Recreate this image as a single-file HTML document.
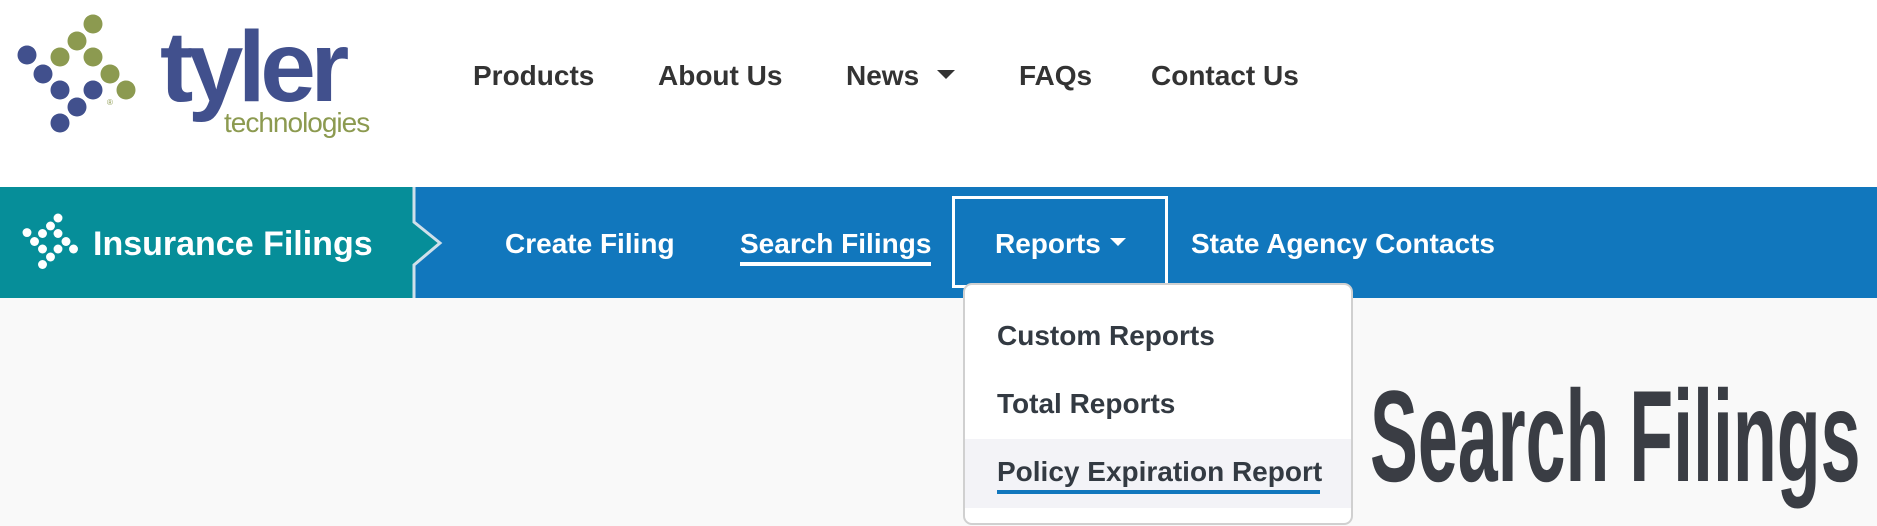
<!DOCTYPE html>
<html><head><meta charset="utf-8">
<style>
*{margin:0;padding:0;box-sizing:border-box}
body{width:1877px;height:526px;overflow:hidden;background:#f9f9f9;font-family:"Liberation Sans",Arial,sans-serif;position:relative}
.a{position:absolute;white-space:nowrap}
.top{position:absolute;left:0;top:0;width:1877px;height:187px;background:#fff}
.tn{font-weight:bold;font-size:28px;line-height:28px;color:#333;top:62px}
.bn{font-weight:bold;font-size:28px;line-height:28px;color:#fff;top:230px}
.dd{font-weight:bold;font-size:28px;line-height:28px;color:#333a42}
</style></head><body>
<div class="top"></div>
<svg class="a" style="left:0;top:0" width="160" height="140">
<g fill="#8c9a50"><circle cx="93" cy="24" r="9.5"/><circle cx="77" cy="41" r="9.5"/><circle cx="60" cy="57" r="9.5"/><circle cx="93" cy="57" r="9.5"/><circle cx="110" cy="74" r="9.5"/><circle cx="126" cy="90" r="9.5"/></g>
<g fill="#41508d"><circle cx="27" cy="55" r="9.5"/><circle cx="43" cy="74" r="9.5"/><circle cx="60" cy="90" r="9.5"/><circle cx="93" cy="90" r="9.5"/><circle cx="77" cy="107" r="9.5"/><circle cx="60" cy="123" r="9.5"/></g>
<text x="110" y="105" font-size="8" fill="#8c9a50" text-anchor="middle" font-family="Liberation Sans">®</text>
</svg>
<div class="a" style="left:160px;top:17px;font-size:100px;line-height:100px;font-weight:bold;color:#41508d;letter-spacing:-5.5px">tyler</div>
<div class="a" style="left:224px;top:109px;font-size:28px;line-height:28px;color:#8c9a50;letter-spacing:-1px">technologies</div>
<div class="a tn" style="left:473px">Products</div>
<div class="a tn" style="left:658px">About Us</div>
<div class="a tn" style="left:846px">News</div>
<svg class="a" style="left:937px;top:70px" width="18" height="10"><path d="M0 0H18L9 9Z" fill="#333"/></svg>
<div class="a tn" style="left:1019px">FAQs</div>
<div class="a tn" style="left:1151px">Contact Us</div>

<svg class="a" style="left:0;top:187px" width="1877" height="111">
<rect width="1877" height="111" fill="#1177bd"/>
<path d="M0 0H413V35L440 56L413 78V111H0Z" fill="#068e99"/>
<path d="M414 0V35L440 56L414 78V111" fill="none" stroke="#cfe0ea" stroke-width="3"/>
<g fill="#fff" transform="translate(14.3,19.7) scale(0.47)">
<circle cx="93" cy="24" r="9.5"/><circle cx="77" cy="41" r="9.5"/><circle cx="60" cy="57" r="9.5"/><circle cx="93" cy="57" r="9.5"/><circle cx="110" cy="74" r="9.5"/><circle cx="126" cy="90" r="9.5"/>
<circle cx="27" cy="55" r="9.5"/><circle cx="43" cy="74" r="9.5"/><circle cx="60" cy="90" r="9.5"/><circle cx="93" cy="90" r="9.5"/><circle cx="77" cy="107" r="9.5"/><circle cx="60" cy="123" r="9.5"/>
</g>
</svg>
<div class="a" style="left:93px;top:227px;font-size:34px;line-height:34px;font-weight:bold;color:#fff">Insurance Filings</div>
<div class="a bn" style="left:505px">Create Filing</div>
<div class="a bn" style="left:740px">Search Filings</div>
<div class="a" style="left:740px;top:262px;width:191px;height:4px;background:#fff"></div>
<div class="a" style="left:952px;top:196px;width:216px;height:92px;border:3px solid #fff"></div>
<div class="a bn" style="left:995px">Reports</div>
<svg class="a" style="left:1110px;top:238px" width="16" height="9"><path d="M0 0H16L8 8Z" fill="#fff"/></svg>
<div class="a bn" style="left:1191px">State Agency Contacts</div>

<div class="a" style="left:963px;top:283px;width:390px;height:242px;background:#fff;border:2px solid #d0d0d0;border-radius:9px;overflow:hidden">
<div class="a" style="left:0;top:154px;width:390px;height:69px;background:#f3f3f7"></div>
</div>
<div class="a dd" style="left:997px;top:322px">Custom Reports</div>
<div class="a dd" style="left:997px;top:390px">Total Reports</div>
<div class="a dd" style="left:997px;top:458px">Policy Expiration Report</div>
<div class="a" style="left:997px;top:490px;width:323px;height:4px;background:#1177bd"></div>

<div class="a" style="left:1370px;top:371px;font-size:130px;line-height:130px;font-weight:bold;color:#3a3d44;transform:scaleX(0.552);transform-origin:0 0">Search Filings</div>
</body></html>
